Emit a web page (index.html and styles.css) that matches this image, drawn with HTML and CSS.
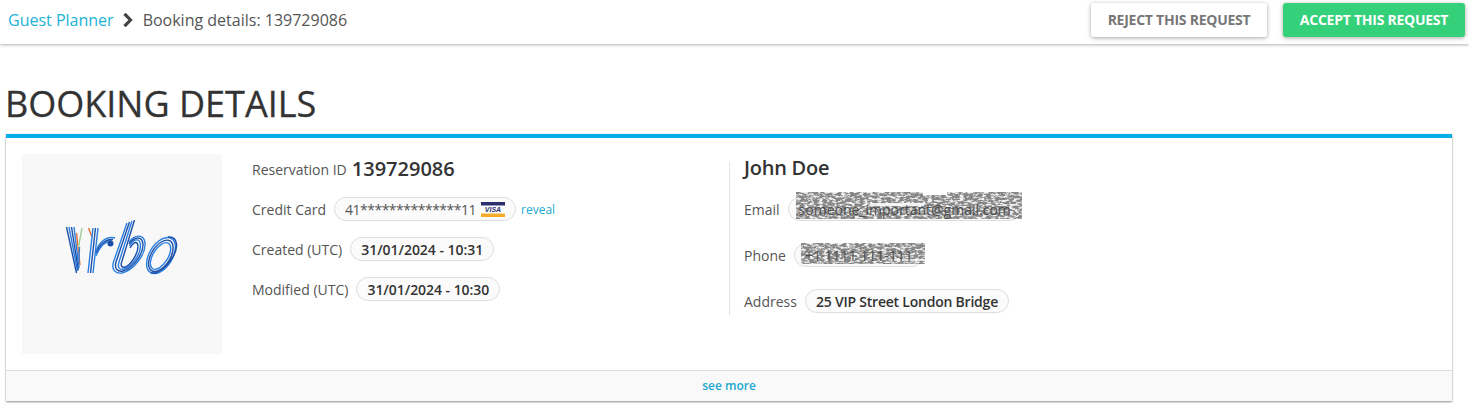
FILE: index.html
```html
<!DOCTYPE html>
<html lang="en">
<head>
<meta charset="utf-8">
<title>Booking details</title>
<link rel="stylesheet" href="styles.css">
</head>
<body>
<svg class="defs" width="0" height="0" aria-hidden="true">
  <filter id="noise" x="0" y="0" width="100%" height="100%">
    <feTurbulence type="fractalNoise" baseFrequency="0.22 0.48" numOctaves="3" seed="7"/>
    <feColorMatrix type="matrix" values="0 0 0 0 0.88  0 0 0 0 0.88  0 0 0 0 0.88  3 3 0 0 -2.7"/>
    <feGaussianBlur stdDeviation="0.45"/>
  </filter>
</svg>
<header class="topbar">
  <nav class="crumbs">
    <a class="crumb-link" href="#">Guest Planner</a>
    <svg class="chevron" width="12" height="14" viewBox="0 0 12 14"><path d="M2.500.8 8.500 7l-6 6.200" fill="none" stroke="#444" stroke-width="3.200"/></svg>
    <span class="crumb-current">Booking details: 139729086</span>
  </nav>
  <div class="actions">
    <button class="btn btn-reject">REJECT THIS REQUEST</button>
    <button class="btn btn-accept">ACCEPT THIS REQUEST</button>
  </div>
</header>
<main class="page">
  <h1 class="title">BOOKING DETAILS</h1>
  <section class="card">
    <div class="card-body">
      <div class="logo-box">
        <svg class="logo" width="112" height="68" viewBox="66 220 112 68" fill="none" stroke-width="1.400">
          <!-- V -->
          <g stroke="#2a7fe0">
            <path d="M69 227 77.500 271M74 227 79 268"/>
          </g>
          <g stroke="#1d4fa8">
            <path d="M66.500 227 76.500 273M71.500 227 78.300 270"/>
          </g>
          <path d="M76.500 233 80 265" stroke="#e8703a"/>
          <path d="M82 228 78.500 247" stroke="#9fd09a"/>
          <path d="M79.500 247 78.500 268" stroke="#2a7fe0"/>
          <!-- r -->
          <path d="M88.500 228 92 237" stroke="#e8703a"/>
          <g stroke="#2a7fe0">
            <path d="M93 228 88 273M98 228 93 273"/>
            <path d="M96.500 250C100 241 107 236 115 238"/>
            <path d="M96 256C100 246 106 241 112 241"/>
          </g>
          <g stroke="#1d4fa8">
            <path d="M95.500 228 90.500 273"/>
            <path d="M96 253C100 244 106 239 113 239.500"/>
          </g>
          <circle cx="110.500" cy="243.500" r="3" fill="#1d4fa8" stroke="none"/>
          <!-- b -->
          <g stroke="#2a7fe0">
            <path d="M127 223 113.500 262C111 270 116 274 122 273C134 270 146 254 145 243C144 234 135 234 129 242"/>
            <path d="M132 221 119 262C117 268 120 270 124 269C133 266 141 253 140.500 245C140 238 134 238 129.500 246"/>
          </g>
          <g stroke="#1d4fa8">
            <path d="M129.500 222 116 262C114 269 118 272 123 271C133 268 143.500 254 143 244C142 236 135 236 129 244"/>
            <path d="M134.500 220 122 261C120 266 122 268 125.500 267C132 264 138.500 252 138 246C137.500 241 134 241 130 248"/>
          </g>
          <!-- o -->
          <g stroke="#2a7fe0">
            <ellipse cx="161" cy="255.500" rx="20" ry="11.500" transform="rotate(-58 161 255.500)"/>
            <ellipse cx="160.500" cy="256" rx="15" ry="7.500" transform="rotate(-58 160.500 256)"/>
          </g>
          <g stroke="#1d4fa8">
            <ellipse cx="160.800" cy="255.800" rx="17.500" ry="9.500" transform="rotate(-58 160.800 255.800)"/>
            <path d="M168 237C178 236 179 248 172 258C166 268 157 274 151 273" stroke-width="1.500"/>
          </g>
        </svg>
      </div>
      <div class="col col-left">
        <div class="row row-id"><span class="label">Reservation ID</span><span class="res-id">139729086</span></div>
        <div class="row"><span class="label">Credit Card</span>
          <span class="pill pill-plain"><span class="card-num">41**************11</span>
            <svg class="visa" width="24" height="15" viewBox="0 0 24 15"><rect width="24" height="15" fill="#fff"/><rect width="24" height="3.500" fill="#2b2f6e"/><rect y="11.500" width="24" height="3.500" fill="#f7ab2a"/><text x="12" y="10" class="visa-text" text-anchor="middle">VISA</text></svg>
          </span>
          <a class="reveal" href="#">reveal</a>
        </div>
        <div class="row"><span class="label">Created (UTC)</span><span class="pill">31/01/2024 - 10:31</span></div>
        <div class="row"><span class="label">Modified (UTC)</span><span class="pill">31/01/2024 - 10:30</span></div>
      </div>
      <div class="col col-right">
        <div class="name">John Doe</div>
        <div class="row-c"><span class="label">Email</span>
          <span class="pill pill-plain blur-wrap"><span class="over-noise">someone_important@gmail.com</span>
            <svg class="noise noise-email"><rect width="100%" height="100%" fill="#858585"/><rect width="100%" height="100%" filter="url(#noise)"/><rect x="127" width="24" height="3" fill="#fff"/><rect x="74" y="11" width="54" height="3" fill="#fff" fill-opacity=".85"/></svg>
          </span>
        </div>
        <div class="row-c"><span class="label">Phone</span>
          <span class="pill pill-plain blur-wrap"><span class="over-noise">+1 1111 111-111</span>
            <svg class="noise noise-phone"><rect width="100%" height="100%" fill="#858585"/><rect width="100%" height="100%" filter="url(#noise)"/><rect x="90" y="16" width="34" height="2" fill="#fff" fill-opacity=".7"/></svg>
          </span>
        </div>
        <div class="row-c"><span class="label">Address</span><span class="pill pill-address">25 VIP Street London Bridge</span></div>
      </div>
    </div>
    <footer class="card-foot"><a class="see-more" href="#">see more</a></footer>
  </section>
</main>
</body>
</html>
```
FILE: styles.css
```css
* { box-sizing: border-box; }
html, body { margin: 0; padding: 0; }
body {
  background: #fff;
  font-family: "Open Sans", "Noto Sans", sans-serif;
  color: #333;
  height: 418px;
  overflow: hidden;
}
a { text-decoration: none; }
.defs { position: absolute; }

.topbar {
  height: 44px;
  display: flex;
  align-items: center;
  justify-content: space-between;
  padding: 0 4px 4px 8px;
  background: #fff;
  box-shadow: 0 1px 3px rgba(0, 0, 0, .3);
}
.crumbs { display: flex; align-items: center; font-size: 16px; color: #555; }
.crumb-link { color: #20b3d6; }
.chevron { margin: 0 9px 0 8px; }
.actions { display: flex; gap: 16px; }
.btn {
  height: 34px;
  border: 0;
  border-radius: 3px;
  font: 700 14px "Open Sans", sans-serif;
  letter-spacing: -.25px;
  padding: 0 0 2px;
  box-shadow: 0 1px 4px rgba(0, 0, 0, .35);
}
.btn-reject { width: 176px; background: #fff; color: #777; }
.btn-accept { width: 182px; background: #35d07a; color: #fff; }

.page { padding: 0 17px 0 6px; }
.title {
  margin: 37px 0 0 -1px;
  height: 53px;
  font-size: 36px;
  line-height: 46px;
  font-weight: 400;
  color: #333;
  -webkit-text-stroke: .3px #333;
}
.card {
  border-top: 4px solid #00aee8;
  background: #fff;
  box-shadow: 0 1px 2px rgba(0, 0, 0, .45);
}
.card-body { display: flex; height: 232px; padding: 16px 0 0 16px; }
.logo-box {
  width: 200px;
  height: 200px;
  background: #f8f8f8;
  display: flex;
  align-items: center;
  justify-content: center;
}
.logo { display: block; }
.col { display: flex; flex-direction: column; font-size: 14px; }
.col-left { width: 507px; padding: 0 0 0 30px; }
.col-right {
  border-left: 1px solid #e2e2e2;
  margin-top: 8px;
  height: 153px;
  padding-left: 14px;
}
.row { display: flex; align-items: center; height: 24px; margin-top: 16px; }
.row-id { margin-top: 3px; }
.label { color: #555; }
.res-id { font-size: 20px; font-weight: 600; margin-left: 5px; line-height: 24px; color: #333; }
.pill {
  display: inline-flex;
  align-items: center;
  height: 24px;
  margin-left: 8px;
  padding: 0 10px;
  border: 1px solid #ddd;
  border-radius: 12px;
  background: #fbfbfb;
  font-weight: 600;
  letter-spacing: -.04px;
  color: #333;
}
.pill-address { letter-spacing: -.22px; }
.pill-plain { font-weight: 400; letter-spacing: 0; color: #555; }
.card-num { letter-spacing: -.5px; }
.visa { margin-left: 5px; }
.visa-text { font: italic 700 7px "Liberation Sans", sans-serif; fill: #2b2f6e; }
.reveal { font-size: 12px; color: #20a8cf; margin-left: 5px; }
.name { font-size: 20px; font-weight: 600; letter-spacing: -.25px; line-height: 24px; margin-top: -6px; color: #333; }
.row-c { display: flex; align-items: center; height: 24px; margin-top: 22px; }
.row-c:nth-child(2) { margin-top: 17px; }
.blur-wrap { position: relative; }
.over-noise { position: relative; z-index: 1; color: #4d4d4d; }
.noise { position: absolute; display: block; }
.noise-email { left: 7px; top: -6px; width: 226px; height: 27px; }
.noise-phone { left: 6px; top: -1px; width: 124px; height: 21px; }
.card-foot {
  height: 31px;
  padding-bottom: 2px;
  border-top: 1px solid #ddd;
  background: #f9f9f9;
  display: flex;
  align-items: center;
  justify-content: center;
}
.see-more { font-size: 12px; font-weight: 600; color: #20a8cf; }
```
